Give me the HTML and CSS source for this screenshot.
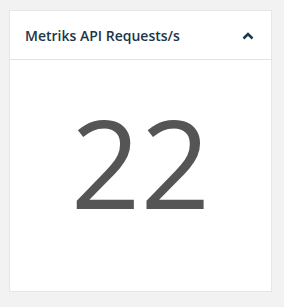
FILE: index.html
```html
<!DOCTYPE html>
<html lang="en">
<head>
  <meta charset="UTF-8">
  <title>Metriks API Requests/s</title>
  <link rel="stylesheet" href="styles.css">
</head>
<body>
  <div class="widget">
    <div class="widget-header">
      <h3 class="widget-title">Metriks API Requests/s</h3>
      <svg class="toggle" width="12" height="8" viewBox="0 0 12 8">
        <path d="M1.5 6.5 L6 2 L10.5 6.5" fill="none" stroke="#1a3a50" stroke-width="2.6"/>
      </svg>
    </div>
    <div class="widget-body">
      <div class="metric">22</div>
    </div>
  </div>
</body>
</html>
```

FILE: styles.css
```css
* { box-sizing: border-box; }
body {
  margin: 0;
  padding: 10px 12px 16px 9px;
  background: #f2f2f2;
  font-family: 'Open Sans', sans-serif;
}
.widget {
  background: #fff;
  border: 1px solid #e6e6e6;
  width: 263px;
}
.widget-header {
  display: flex;
  align-items: center;
  justify-content: space-between;
  height: 49px;
  padding: 0 17px 0 15px;
  border-bottom: 1px solid #e3e3e3;
}
.widget-title {
  margin: 0;
  font-size: 14px;
  font-weight: 600;
  color: #1c3548;
}
.toggle { margin-top: 2px; }
.widget-body {
  height: 231px;
  display: flex;
  justify-content: center;
  padding-top: 29px;
}
.metric {
  font-size: 122px;
  line-height: 1.2;
  color: #555;
}
```
